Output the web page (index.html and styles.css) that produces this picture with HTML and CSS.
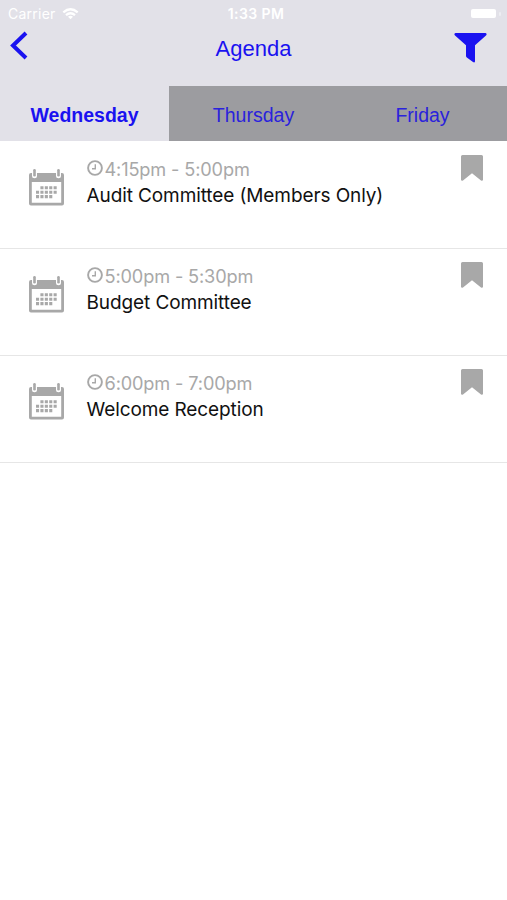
FILE: index.html
```html
<!DOCTYPE html>
<html lang="en">
<head>
    <meta charset="UTF-8">
    <meta name="viewport" content="width=device-width, initial-scale=1.0">
    <title>Agenda</title>
    <link rel="stylesheet" href="styles.css">
</head>
<body>
    <!-- icons shared by the agenda rows -->
    <svg class="sprite">
        <symbol id="calendar" viewBox="0 0 37 38">
            <path fill-rule="evenodd" d="M3 5H34Q36 5 36 7V35.500Q36 37.500 34 37.500H3Q1 37.500 1 35.500V7Q1 5 3 5ZM3.800 14V34.800H33.200V14Z"/>
            <rect class="ring" x="4" y="1.500" width="5" height="8.800" rx="2.500"/>
            <rect class="ring" x="28" y="1.500" width="5" height="8.800" rx="2.500"/>
            <rect x="5.200" y="1" width="2.600" height="7.500" rx="1.300"/>
            <rect x="29.200" y="1" width="2.600" height="7.500" rx="1.300"/>
            <path class="days" d="M12.400 19.800H29.500M8 24.200H29.500M8 28.600H24.900"/>
        </symbol>
        <symbol id="clock" viewBox="0 0 16 16">
            <circle cx="8" cy="8" r="6.900" fill="none" stroke="currentColor" stroke-width="1.900"/>
            <path d="M8.300 4.200V8.700H5" fill="none" stroke="currentColor" stroke-width="1.400"/>
        </symbol>
        <symbol id="bookmark" viewBox="0 0 22 26">
            <path d="M1.500 0H20.500Q22 0 22 1.500V25Q21.500 26.300 20 25.500L11 18.200L2 25.500Q.5 26.300 0 25V1.500Q0 0 1.500 0Z"/>
        </symbol>
    </svg>

    <header class="header">
        <div class="status">
            <div class="carrier">
                <span>Carrier</span>
                <svg class="wifi" viewBox="0 0 18 13">
                    <path d="M1.200 4.700Q9 -2 16.800 4.700M4.100 7.800Q9 3.600 13.900 7.800" fill="none" stroke="#fff" stroke-width="2.400"/>
                    <path d="M6.300 9.500Q9 7.500 11.700 9.500L9 12.300Z" fill="#fff"/>
                </svg>
            </div>
            <span class="time">1:33 PM</span>
            <div class="battery"><span class="level"></span><span class="cap"></span></div>
        </div>
        <div class="navbar">
            <svg class="back" viewBox="0 0 18 29">
                <path d="M16 2L3 14.500L16 27" fill="none" stroke="#1a12f0" stroke-width="4" stroke-linejoin="miter"/>
            </svg>
            <h1>Agenda</h1>
            <svg class="filter" viewBox="0 0 33 30">
                <path d="M1.500 0H31.500Q33.500 .8 32 2.500L21 12.300V28.500Q20.500 30 19 29L12.800 24.500Q12 23.800 12 23V12.300L1 2.500Q-.5 .8 1.500 0Z" fill="#1a12f0"/>
            </svg>
        </div>
    </header>

    <nav class="tabs">
        <a class="tab active">Wednesday</a>
        <a class="tab">Thursday</a>
        <a class="tab">Friday</a>
    </nav>

    <ul class="agenda">
        <li class="event">
            <svg class="calendar"><use href="#calendar"/></svg>
            <div class="info">
                <div class="hours"><svg class="clock"><use href="#clock"/></svg><span>4:15pm - 5:00pm</span></div>
                <div class="title">Audit Committee (Members Only)</div>
            </div>
            <svg class="bookmark"><use href="#bookmark"/></svg>
        </li>
        <li class="event">
            <svg class="calendar"><use href="#calendar"/></svg>
            <div class="info">
                <div class="hours"><svg class="clock"><use href="#clock"/></svg><span>5:00pm - 5:30pm</span></div>
                <div class="title">Budget Committee</div>
            </div>
            <svg class="bookmark"><use href="#bookmark"/></svg>
        </li>
        <li class="event">
            <svg class="calendar"><use href="#calendar"/></svg>
            <div class="info">
                <div class="hours"><svg class="clock"><use href="#clock"/></svg><span>6:00pm - 7:00pm</span></div>
                <div class="title">Welcome Reception</div>
            </div>
            <svg class="bookmark"><use href="#bookmark"/></svg>
        </li>
    </ul>
</body>
</html>
```

FILE: styles.css
```css
body {
    margin: 0;
    min-height: 900px;
    background-color: #fff;
    font-family: Inter, "Liberation Sans", sans-serif;
}

svg {
    display: block;
    flex: none;
}

.sprite {
    display: none;
}

.header {
    height: 86px;
    background-color: #e2e1e8;
}

.status {
    display: grid;
    grid-template-columns: 1fr auto 1fr;
    align-items: center;
    height: 27px;
    padding: 0 6px 0 8px;
    color: #fff;
    font-size: 14px;
}

.carrier {
    display: flex;
    align-items: center;
    gap: 6px;
    letter-spacing: 0.25px;
}

.wifi {
    width: 17px;
    height: 12px;
}

.time {
    padding-left: 3px;
    font-weight: 600;
    letter-spacing: 0.4px;
}

.battery {
    display: flex;
    align-items: center;
    justify-content: flex-end;
    gap: 3px;
}

.level {
    width: 25px;
    height: 9px;
    border-radius: 2px;
    background-color: #fff;
}

.cap {
    width: 2px;
    height: 4px;
    border-radius: 1px;
    background-color: #ededf2;
}

.navbar {
    display: grid;
    grid-template-columns: 1fr auto 1fr;
    align-items: start;
    height: 59px;
    padding: 0 20px 0 10px;
}

.back {
    width: 18px;
    height: 29px;
    margin-top: 4px;
}

h1 {
    margin: 8px 0 0 10px;
    color: #1a12f0;
    font-family: "Liberation Sans", Arial, sans-serif;
    font-size: 22px;
    font-weight: normal;
    line-height: 27px;
}

.filter {
    justify-self: end;
    width: 33px;
    height: 30px;
    margin-top: 6px;
}

.tabs {
    display: grid;
    grid-template-columns: repeat(3, 1fr);
    height: 55px;
    background-color: #9c9ca0;
}

.tab {
    display: flex;
    align-items: center;
    justify-content: center;
    padding-top: 3px;
    color: #2a22dc;
    font-family: "Liberation Sans", Arial, sans-serif;
    font-size: 19.5px;
}

.tab.active {
    background-color: #e2e1e8;
    color: #1a12f0;
    font-weight: bold;
}

.agenda {
    margin: 0;
    padding: 1px 0 0;
    list-style: none;
}

.event {
    display: flex;
    align-items: flex-start;
    box-sizing: border-box;
    height: 107px;
    padding: 13px 24px 0 28px;
    border-bottom: 1px solid #e6e6e6;
    color: #a8a8a8;
    fill: currentColor;
}

.calendar {
    width: 37px;
    height: 38px;
    margin-top: 13px;
}

.ring {
    fill: #fff;
}

.days {
    stroke: currentColor;
    stroke-width: 3.1;
    stroke-dasharray: 3.1 1.3;
}

.info {
    flex: 1;
    padding-left: 21.500px;
}

.hours {
    display: flex;
    align-items: center;
    gap: 2px;
    height: 27px;
    font-size: 18.2px;
    letter-spacing: -0.15px;
}

.clock {
    width: 16px;
    height: 16px;
    margin-top: -2px;
}

.title {
    color: #111;
    font-size: 19px;
    line-height: 28px;
    letter-spacing: -0.1px;
}

.bookmark {
    width: 22px;
    height: 26px;
}
```
